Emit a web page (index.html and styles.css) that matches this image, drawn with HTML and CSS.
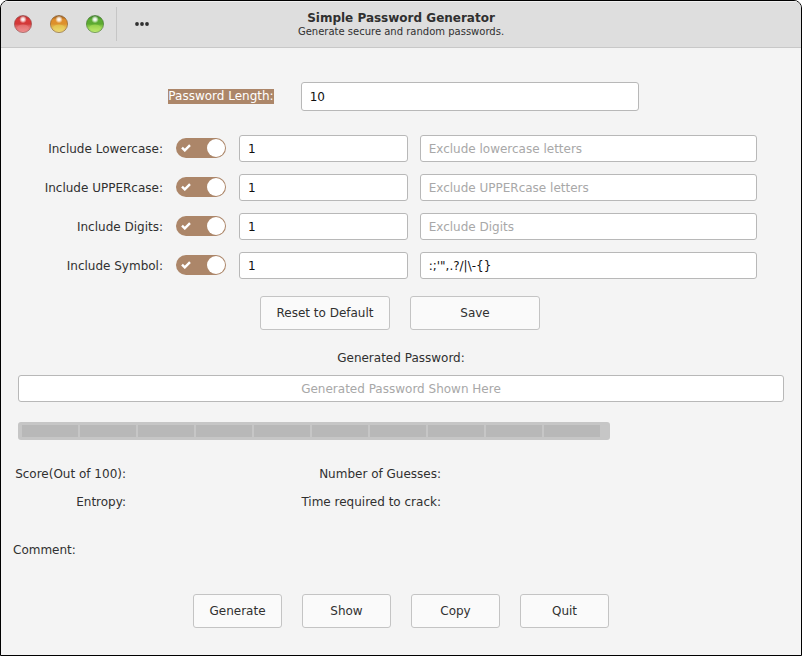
FILE: index.html
```html
<!DOCTYPE html>
<html lang="en">
<head>
<meta charset="utf-8">
<meta name="viewport" content="width=device-width, initial-scale=1">
<title>Simple Password Generator</title>
<link rel="stylesheet" href="styles.css">
</head>
<body>
<svg class="defs" aria-hidden="true">
  <defs>
    <linearGradient id="red" x1="0" y1="0" x2="0" y2="1"><stop offset="0" stop-color="#b02c2c"/><stop offset=".25" stop-color="#d83a3a"/><stop offset=".5" stop-color="#d23838"/><stop offset=".6" stop-color="#dc5c5c"/><stop offset="1" stop-color="#ee9494"/></linearGradient>
    <linearGradient id="orange" x1="0" y1="0" x2="0" y2="1"><stop offset="0" stop-color="#8c5014"/><stop offset=".25" stop-color="#e08e2c"/><stop offset=".5" stop-color="#dc902c"/><stop offset=".6" stop-color="#e0ac44"/><stop offset="1" stop-color="#ecdc80"/></linearGradient>
    <linearGradient id="green" x1="0" y1="0" x2="0" y2="1"><stop offset="0" stop-color="#347c20"/><stop offset=".25" stop-color="#5cac34"/><stop offset=".5" stop-color="#5ca830"/><stop offset=".6" stop-color="#80c444"/><stop offset="1" stop-color="#c4ec78"/></linearGradient>
    <radialGradient id="shine"><stop offset="0" stop-color="#fff"/><stop offset=".4" stop-color="#fff" stop-opacity=".8"/><stop offset="1" stop-color="#fff" stop-opacity="0"/></radialGradient>
    <symbol id="check" viewBox="0 0 10 8"><path d="M1 3.6 3.8 6.4 9 1.2" fill="none" stroke="#fff" stroke-width="2.4"/></symbol>
  </defs>
</svg>
<div class="window">
  <header class="titlebar">
    <div class="controls">
      <button class="orb" aria-label="Close"><svg viewBox="0 0 18 18"><circle cx="9" cy="9" r="8.6" fill="url(#red)" stroke="#8c4444" stroke-opacity=".7" stroke-width=".8"/><ellipse cx="9" cy="12.6" rx="5.8" ry="3" fill="#f09090" opacity=".4"/><circle cx="9" cy="4.4" r="3.8" fill="url(#shine)"/></svg></button>
      <button class="orb" aria-label="Minimize"><svg viewBox="0 0 18 18"><circle cx="9" cy="9" r="8.6" fill="url(#orange)" stroke="#7c5020" stroke-opacity=".7" stroke-width=".8"/><ellipse cx="9" cy="12.6" rx="5.8" ry="3" fill="#ece060" opacity=".4"/><circle cx="9" cy="4.4" r="3.8" fill="url(#shine)"/></svg></button>
      <button class="orb" aria-label="Maximize"><svg viewBox="0 0 18 18"><circle cx="9" cy="9" r="8.6" fill="url(#green)" stroke="#3c7028" stroke-opacity=".7" stroke-width=".8"/><ellipse cx="9" cy="12.6" rx="5.8" ry="3" fill="#c4ec60" opacity=".4"/><circle cx="9" cy="4.4" r="3.8" fill="url(#shine)"/></svg></button>
      <button class="menu" aria-label="Menu"><svg viewBox="0 0 14 4"><circle cx="2" cy="2" r="1.9"/><circle cx="7" cy="2" r="1.9"/><circle cx="12" cy="2" r="1.9"/></svg></button>
    </div>
    <div class="heading">
      <h1>Simple Password Generator</h1>
      <p>Generate secure and random passwords.</p>
    </div>
  </header>
  <main>
    <div class="length">
      <label for="length"><span class="selected">Password Length:</span></label>
      <input class="entry entry-tall" id="length" type="text" value="10">
    </div>
    <div class="rules">
      <label for="lower">Include Lowercase:</label>
      <span class="switch"><input id="lower" type="checkbox" checked><svg><use href="#check"/></svg></span>
      <input class="entry" type="text" value="1" aria-label="Lowercase count">
      <input class="entry" type="text" placeholder="Exclude lowercase letters" aria-label="Exclude lowercase letters">

      <label for="upper">Include UPPERcase:</label>
      <span class="switch"><input id="upper" type="checkbox" checked><svg><use href="#check"/></svg></span>
      <input class="entry" type="text" value="1" aria-label="Uppercase count">
      <input class="entry" type="text" placeholder="Exclude UPPERcase letters" aria-label="Exclude uppercase letters">

      <label for="digits">Include Digits:</label>
      <span class="switch"><input id="digits" type="checkbox" checked><svg><use href="#check"/></svg></span>
      <input class="entry" type="text" value="1" aria-label="Digit count">
      <input class="entry" type="text" placeholder="Exclude Digits" aria-label="Exclude digits">

      <label for="symbol">Include Symbol:</label>
      <span class="switch"><input id="symbol" type="checkbox" checked><svg><use href="#check"/></svg></span>
      <input class="entry" type="text" value="1" aria-label="Symbol count">
      <input class="entry" type="text" value=":;'&quot;,.?/|\-{}" aria-label="Exclude symbols">
    </div>
    <div class="actions settings">
      <button class="button wide">Reset to Default</button>
      <button class="button wide">Save</button>
    </div>
    <div class="result">
      <label for="password">Generated Password:</label>
      <input class="entry" id="password" type="text" placeholder="Generated Password Shown Here">
      <div class="strength" role="meter" aria-label="Password strength" aria-valuemin="0" aria-valuemax="10" aria-valuenow="0">
        <i></i><i></i><i></i><i></i><i></i><i></i><i></i><i></i><i></i><i></i>
      </div>
    </div>
    <div class="stats">
      <span>Score(Out of 100):</span><span>Number of Guesses:</span>
      <span>Entropy:</span><span>Time required to crack:</span>
    </div>
    <p class="comment">Comment:</p>
    <div class="actions">
      <button class="button">Generate</button>
      <button class="button">Show</button>
      <button class="button">Copy</button>
      <button class="button">Quit</button>
    </div>
  </main>
</div>
</body>
</html>
```
FILE: styles.css
```css
* { box-sizing: border-box; }

body {
  margin: 0;
  background: #fff;
  color: #303030;
  font: 12px/16px "DejaVu Sans", sans-serif;
}

h1, p { margin: 0; }
input, button { font: inherit; }
.defs { position: absolute; width: 0; height: 0; }

.window {
  min-height: 100vh;
  border: 1px solid #000;
  border-radius: 8px 8px 0 0;
  background: #f4f4f4;
  overflow: hidden;
}

.titlebar {
  display: grid;
  grid-template-columns: 1fr auto 1fr;
  height: 47px;
  border-top: 1px solid #f0f0f0;
  border-bottom: 1px solid #c8c8c8;
  background: #dedede;
}

.controls { display: flex; align-items: center; gap: 18px; padding: 0 0 1px 13px; }

.orb, .menu { padding: 0; border: 0; background: none; }
.orb { width: 18px; height: 18px; }
.orb svg, .menu svg { display: block; }

.menu {
  align-self: stretch;
  display: flex;
  align-items: center;
  margin: 5px 0 5px -6px;
  padding-left: 18px;
  border-left: 1px solid #c6c6c6;
}
.menu svg { width: 14px; height: 4px; fill: #303030; }

.heading { padding-top: 8px; text-align: center; }
.heading h1 { font-size: 12px; line-height: 16px; }
.heading p { font-size: 10px; line-height: 12px; }

.entry {
  width: 100%;
  min-width: 0;
  height: 27px;
  padding: 0 8px;
  border: 1px solid #b8b8b8;
  border-radius: 3px;
  background: #fff;
  color: #101010;
}
.entry-tall { width: 338px; height: 29px; }
.entry::placeholder { color: #a8a8a8; opacity: 1; }

.length {
  display: flex;
  align-items: center;
  justify-content: center;
  gap: 27px;
  padding: 34px 0 24px 5px;
}
.selected { display: block; line-height: 15px; background: #ac8669; color: #fff; }

.rules {
  display: grid;
  grid-template-columns: 119px 52px 1fr 2fr;
  gap: 12px;
  align-items: center;
  margin: 0 44px 0 43px;
}
.rules label { text-align: right; }

.switch {
  position: relative;
  justify-self: center;
  width: 50px;
  height: 21px;
}
.switch input {
  appearance: none;
  display: flex;
  justify-content: flex-end;
  width: 50px;
  height: 20px;
  margin: 0;
  padding: 1px;
  border-radius: 10px;
  background: #ac8669;
}
.switch input::after {
  content: "";
  width: 18px;
  height: 18px;
  border-radius: 50%;
  background: #fff;
}
.switch svg {
  position: absolute;
  left: 5px;
  top: 6px;
  width: 10px;
  height: 8px;
  pointer-events: none;
}

.actions { display: flex; justify-content: center; gap: 20px; }
.settings { padding: 17px 2px 0 0; }

.button {
  width: 89px;
  height: 34px;
  padding: 0;
  border: 1px solid #c4c4c4;
  border-radius: 3px;
  background: #fafafa;
  color: #303030;
}
.wide { width: 130px; }

.result { padding: 20px 17px 0; text-align: center; }
.result label { display: block; margin-bottom: 9px; }
.result .entry { display: block; text-align: center; }

.strength {
  display: flex;
  gap: 2px;
  width: fit-content;
  height: 18px;
  margin-top: 20px;
  padding: 3px 10px 3px 4px;
  border-radius: 3px;
  background: #c6c6c6;
}
.strength i { width: 56px; background: #b8b8b8; }

.stats {
  display: grid;
  grid-template-columns: 113px 315px;
  row-gap: 12px;
  padding: 26px 12px 0;
  text-align: right;
}

.comment { padding: 32px 12px 36px; }
```
